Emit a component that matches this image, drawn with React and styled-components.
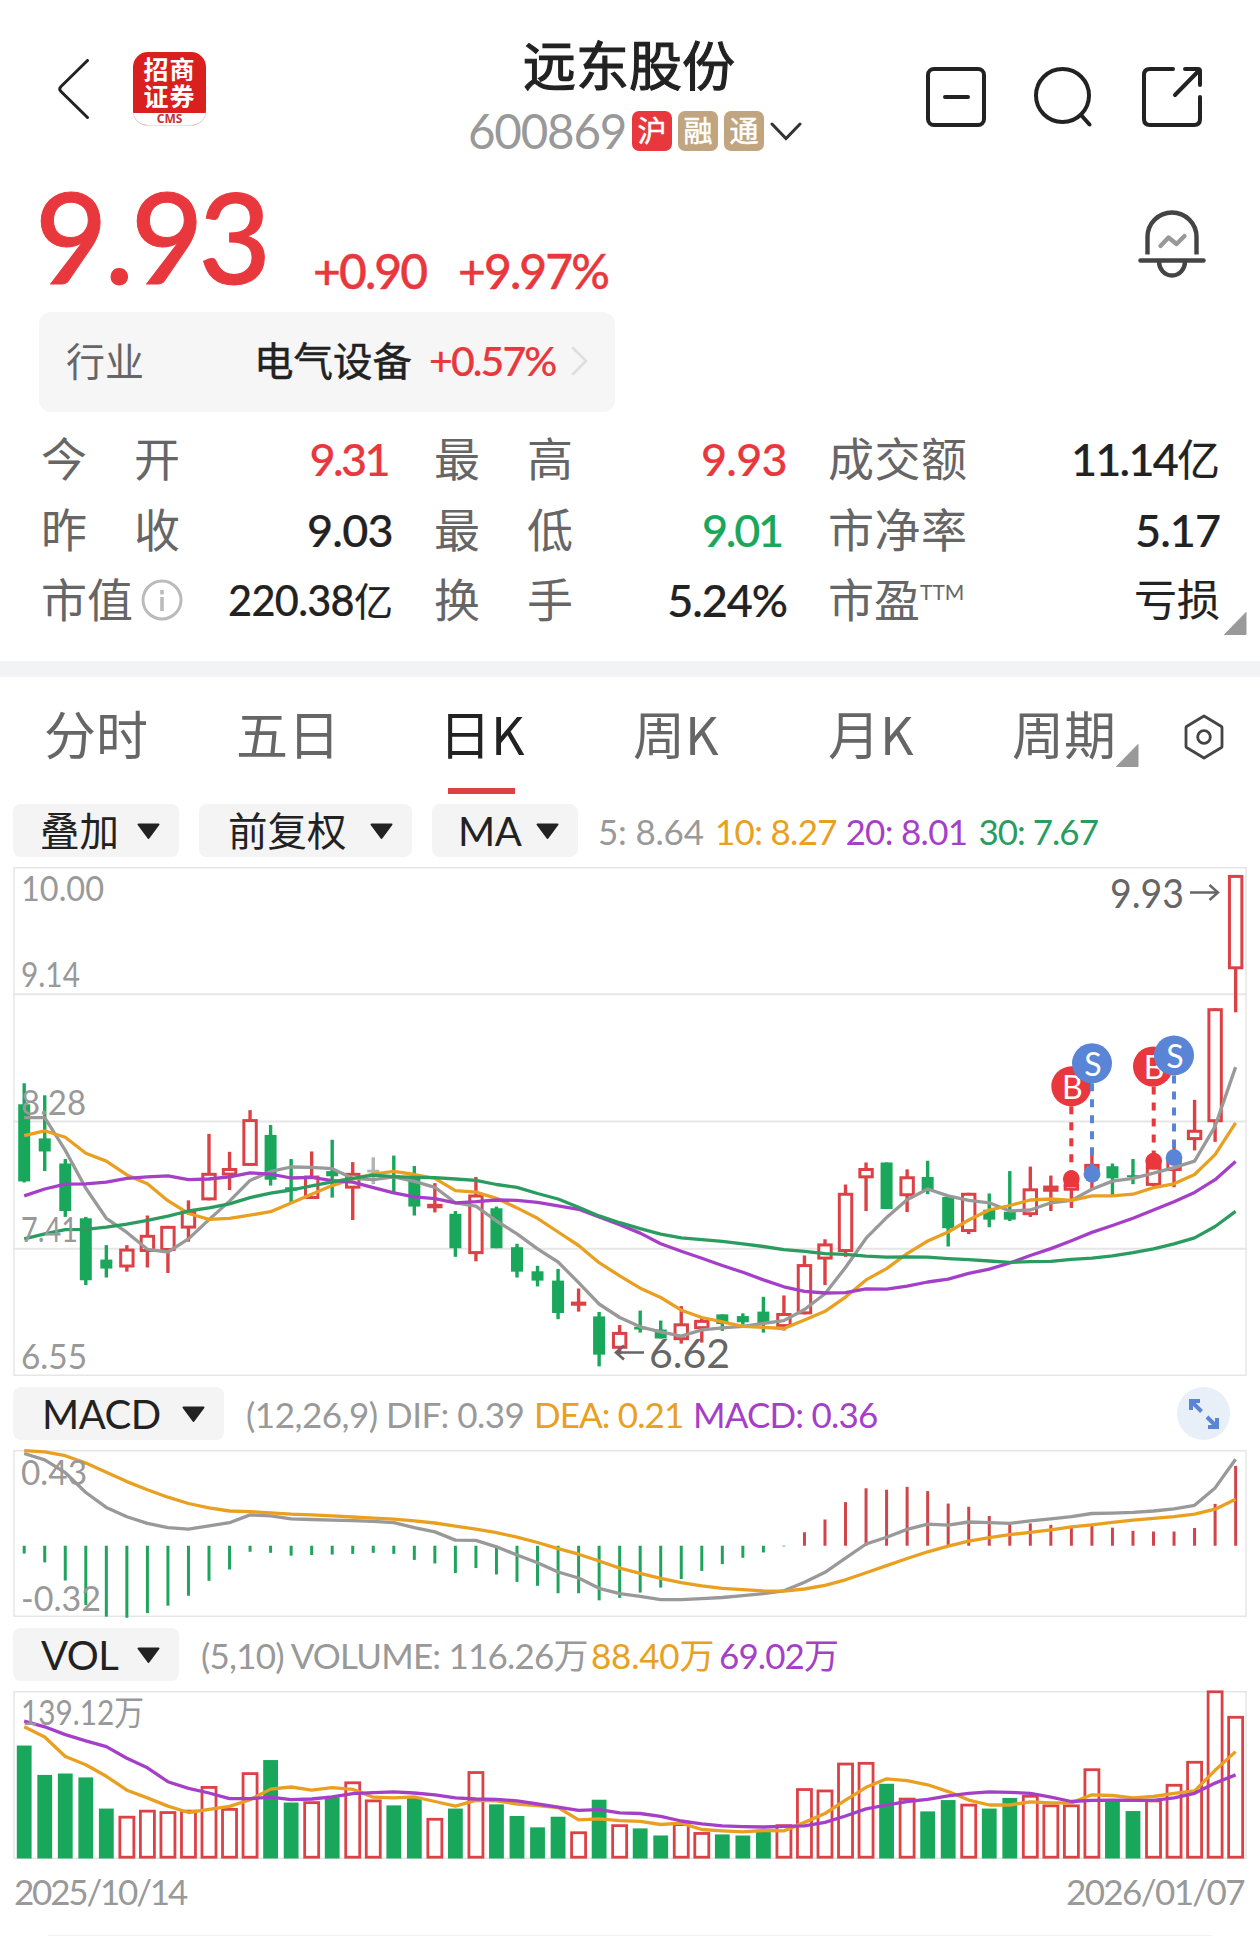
import React from "react";
import styled, { createGlobalStyle } from "styled-components";

const RED = "#e8383d";
const CANDLE_RED = "#dc4146";
const GREEN = "#18a75b";
const GREY = "#999999";
const ORANGE = "#e9a021";
const PURPLE = "#a63fc8";
const LINE_GREEN = "#2b9c5f";

// [high, body top, body bottom, low, direction]
const candles = [
  [650, 711, 935, 938, "d"], [685, 810, 848, 905, "d"], [870, 883, 1021, 1038, "d"],
  [1038, 1042, 1222, 1236, "d"], [1120, 1162, 1188, 1214, "d"], [1120, 1130, 1185, 1197, "u"],
  [1034, 1090, 1140, 1185, "u"], [1064, 1064, 1137, 1201, "u"], [990, 1020, 1072, 1110, "u"],
  [797, 910, 990, 990, "u"], [849, 896, 918, 960, "u"], [728, 754, 890, 890, "u"],
  [771, 800, 930, 947, "d"], [870, 952, 962, 998, "d"], [848, 918, 986, 986, "u"],
  [814, 905, 920, 982, "d"], [879, 910, 956, 1047, "u"], [865, 901, 909, 943, "f"],
  [860, 917, 923, 970, "d"], [890, 925, 1008, 1034, "d"], [940, 1000, 1013, 1025, "u"],
  [1021, 1029, 1129, 1154, "d"], [922, 973, 1146, 1167, "u"], [1008, 1013, 1129, 1129, "d"],
  [1116, 1126, 1197, 1214, "d"], [1180, 1196, 1223, 1240, "d"], [1189, 1223, 1317, 1335, "d"],
  [1246, 1284, 1296, 1313, "u"], [1314, 1327, 1438, 1472, "d"], [1352, 1372, 1421, 1437, "u"],
  [1310, 1357, 1365, 1374, "d"], [1339, 1365, 1391, 1391, "d"], [1297, 1347, 1396, 1406, "u"],
  [1331, 1337, 1364, 1403, "u"], [1321, 1321, 1349, 1369, "d"], [1318, 1326, 1344, 1351, "d"],
  [1270, 1313, 1347, 1374, "d"], [1266, 1317, 1358, 1368, "u"], [1150, 1175, 1321, 1321, "u"],
  [1103, 1115, 1162, 1236, "u"], [944, 968, 1140, 1154, "u"], [880, 896, 926, 1021, "u"],
  [880, 880, 1015, 1015, "d"], [900, 920, 978, 1024, "u"], [875, 922, 960, 972, "d"],
  [975, 980, 1071, 1124, "d"], [968, 968, 1082, 1088, "u"], [970, 1017, 1046, 1068, "d"],
  [905, 1023, 1046, 1050, "d"], [892, 955, 1033, 1038, "u"], [918, 947, 965, 1021, "u"],
  [935, 943, 962, 1012, "u"], [845, 884, 905, 960, "u"], [883, 891, 926, 980, "d"],
  [870, 917, 922, 943, "d"], [870, 885, 948, 950, "u"], [835, 865, 905, 952, "u"],
  [698, 785, 815, 845, "u"], [432, 432, 763, 820, "u"], [45, 45, 319, 444, "u"],
];

const ma5 = [
  750, 750, 845, 955, 1042, 1083, 1132, 1140, 1102, 1046, 992, 932, 906, 893, 894, 898, 926, 930, 922, 935,
  952, 997, 1007, 1050, 1087, 1131, 1169, 1229, 1291, 1330, 1357, 1372, 1384, 1366, 1360, 1356, 1347, 1339, 1307, 1261,
  1185, 1100, 1040, 988, 957, 977, 990, 997, 1021, 1018, 997, 990, 958, 934, 926, 911, 895, 876, 775, 603,
];
const ma10 = [
  802, 788, 807, 853, 876, 916, 942, 991, 1028, 1045, 1042, 1033, 1023, 998, 972, 947, 928, 914, 906, 915,
  926, 962, 966, 984, 1012, 1042, 1082, 1121, 1171, 1209, 1245, 1272, 1309, 1330, 1343, 1356, 1359, 1362, 1337, 1312,
  1271, 1221, 1188, 1145, 1108, 1082, 1047, 1018, 1005, 989, 986, 990, 977, 977, 972, 953, 942, 915, 857, 765,
];
const ma20 = [
  977, 957, 943, 942, 937, 926, 922, 919, 930, 928, 922, 910, 914, 925, 923, 933, 937, 953, 968, 980,
  985, 997, 994, 989, 990, 996, 1006, 1016, 1038, 1061, 1085, 1116, 1138, 1158, 1179, 1199, 1221, 1241, 1254, 1259,
  1258, 1247, 1248, 1239, 1227, 1219, 1202, 1190, 1172, 1150, 1130, 1107, 1083, 1063, 1042, 1018, 994, 967, 930, 877,
];
const ma30 = [
  1102, 1087, 1075, 1074, 1068, 1059, 1048, 1036, 1021, 1012, 1000, 982, 969, 960, 948, 936, 926, 917, 921, 923,
  924, 928, 932, 944, 952, 970, 986, 1010, 1035, 1055, 1072, 1088, 1099, 1104, 1109, 1116, 1124, 1133, 1138, 1145,
  1147, 1152, 1155, 1154, 1155, 1159, 1162, 1166, 1170, 1168, 1167, 1161, 1158, 1151, 1142, 1131, 1116, 1099, 1066, 1022,
];

const macdBars = [
  490, 515, 566, 635, 668, 671, 658, 637, 609, 567, 535, 485, 488, 496, 494, 493, 491, 488, 491, 508,
  518, 545, 531, 549, 570, 581, 602, 602, 622, 615, 600, 586, 562, 539, 520, 502, 487, 470, 430, 394,
  345, 306, 310, 302, 314, 349, 358, 384, 409, 405, 409, 418, 410, 417, 426, 428, 428, 418, 350, 243,
];
const dif = [
  208, 226, 262, 318, 360, 386, 405, 417, 421, 412, 403, 381, 384, 392, 394, 396, 397, 399, 403, 417,
  429, 452, 453, 471, 494, 516, 542, 559, 588, 603, 611, 620, 620, 617, 614, 609, 603, 595, 571, 543,
  503, 463, 444, 422, 407, 410, 401, 403, 405, 398, 392, 386, 377, 376, 374, 370, 364, 354, 305, 224,
];
const dea = [
  200, 203, 214, 235, 261, 287, 310, 331, 349, 361, 370, 372, 375, 379, 381, 384, 387, 390, 393, 398,
  404, 413, 421, 431, 444, 459, 476, 492, 511, 531, 546, 560, 572, 581, 588, 592, 595, 596, 590, 580,
  564, 544, 524, 504, 485, 469, 455, 445, 437, 430, 423, 415, 409, 402, 396, 391, 386, 379, 365, 337,
];

const volumes = [
  1032, 1115, 1111, 1122, 1210, 1232, 1215, 1219, 1215, 1148, 1210, 1109, 1073, 1193, 1191, 1178, 1135, 1186, 1201, 1180,
  1238, 1210, 1106, 1198, 1231, 1263, 1233, 1276, 1185, 1256, 1266, 1286, 1253, 1278, 1283, 1286, 1275, 1256, 1154, 1158,
  1082, 1080, 1140, 1181, 1218, 1186, 1198, 1210, 1180, 1173, 1200, 1200, 1098, 1190, 1217, 1186, 1142, 1077, 878, 950,
];
const volumeDown = [0, 1, 2, 3, 4, 12, 13, 15, 18, 19, 21, 23, 24, 25, 26, 28, 30, 31, 34, 35, 36, 42, 44, 45, 47, 48, 53, 54];
const volMa5 = [
  979, 1008, 1063, 1086, 1119, 1158, 1180, 1203, 1221, 1212, 1204, 1185, 1155, 1149, 1158, 1151, 1156, 1178, 1180, 1177,
  1190, 1203, 1187, 1188, 1197, 1202, 1207, 1242, 1239, 1244, 1246, 1255, 1251, 1269, 1273, 1276, 1272, 1273, 1249, 1224,
  1186, 1150, 1126, 1131, 1143, 1162, 1186, 1200, 1200, 1191, 1194, 1194, 1171, 1173, 1180, 1176, 1167, 1160, 1102, 1049,
];
const volMa10 = [
  963, 979, 1001, 1019, 1035, 1068, 1095, 1134, 1153, 1166, 1182, 1182, 1178, 1185, 1183, 1177, 1168, 1165, 1163, 1166,
  1171, 1180, 1183, 1184, 1188, 1197, 1206, 1215, 1213, 1222, 1224, 1232, 1245, 1253, 1259, 1261, 1262, 1260, 1259, 1249,
  1231, 1211, 1200, 1190, 1184, 1174, 1167, 1163, 1164, 1167, 1178, 1190, 1187, 1186, 1187, 1187, 1180, 1167, 1138, 1115,
];

const stats = [
  [
    { label: ["今", "开"], value: "9.31", color: RED, inset: 5, spacing: -2.6 },
    { label: ["最", "高"], value: "9.93", color: RED },
    { label: ["成", "交", "额"], value: "11.14", unit: "亿", spacing: -1.8 },
  ],
  [
    { label: ["昨", "收"], value: "9.03" },
    { label: ["最", "低"], value: "9.01", color: GREEN, inset: 5, spacing: -2.2 },
    { label: ["市", "净", "率"], value: "5.17", spacing: -1 },
  ],
  [
    { label: ["市", "值"], info: true, value: "220.38", unit: "亿", small: true },
    { label: ["换", "手"], value: "5.24%", spacing: -1.1 },
    { label: ["市", "盈"], sup: "TTM", text: "亏损" },
  ],
];

const markers = [
  { type: "B", x: 1071.3, y: 659, dot: 927 },
  { type: "S", x: 1092, y: 592, dot: 914 },
  { type: "B", x: 1153, dotX: 1153.7, y: 601, dot: 876 },
  { type: "S", x: 1174, y: 569, dot: 866 },
];

const PLOT_W = 1234;
const xAt = (i) => 11.2 + i * 20.533;
const scale = (top, bottom, height) => (v) => ((v - top) * height) / (bottom - top);
const points = (series, y) => series.map((v, i) => `${xAt(i).toFixed(1)},${y(v).toFixed(1)}`).join(" ");

const Trend = ({ series, y, color }) => (
  <polyline points={points(series, y)} fill="none" stroke={color} strokeWidth="3.3" strokeLinejoin="round" />
);

const CandleChart = () => {
  const H = 509;
  const y = scale(22, 1500, H);
  const labels = [["10.00", 34, 82], ["9.14", 120, 58], ["8.28", 247.5, 64], ["7.41", 375, 56], ["6.55", 502, 65]];
  return (
    <Plot viewBox={`0 0 ${PLOT_W} ${H}`} $height={H}>
      {[0.25, 0.5, 0.75].map((k) => (
        <line key={k} x1="0" x2={PLOT_W} y1={H * k} y2={H * k} stroke="#e6e6e6" strokeWidth="2" />
      ))}
      <rect x="1" y="0.75" width={PLOT_W - 2} height={H - 1.5} fill="none" stroke="#e6e6e6" strokeWidth="1.5" />
      {candles.map(([high, top, bottom, low, dir], i) => {
        const x = xAt(i);
        const h = Math.max(y(bottom) - y(top), 2);
        const color = dir === "u" ? CANDLE_RED : dir === "d" ? GREEN : "#b4b4b4";
        const hollow = dir === "u" && h > 6.5;
        return (
          <g key={i}>
            <line x1={x} x2={x} y1={y(high)} y2={y(top) + 1} stroke={color} strokeWidth="3.4" />
            <line x1={x} x2={x} y1={y(bottom) - 1} y2={y(low)} stroke={color} strokeWidth="3.4" />
            {hollow ? (
              <rect x={x - 6.2} y={y(top) + 1.5} width="12.4" height={h - 3} fill="#fff" stroke={color} strokeWidth="3" />
            ) : (
              <rect x={x - (dir === "u" ? 7.7 : 6)} y={y(top)} width={dir === "u" ? 15.4 : 12} height={h} fill={color} />
            )}
          </g>
        );
      })}
      <Trend series={ma5} y={y} color={GREY} />
      <Trend series={ma10} y={y} color={ORANGE} />
      <Trend series={ma20} y={y} color={PURPLE} />
      <Trend series={ma30} y={y} color={LINE_GREEN} />
      {labels.map(([text, ty, w]) => (
        <AxisText key={text} x="8" y={ty} textLength={w + 1} lengthAdjust="spacingAndGlyphs">{text}</AxisText>
      ))}
      {markers.map(({ type, x, dotX, y: cy, dot }, i) => {
        const color = type === "B" ? RED : "#5a85d6";
        const px = (dotX || x) - 13;
        return (
          <g key={i}>
            <line x1={px} x2={px} y1={y(cy) + 20} y2={y(dot)} stroke={color} strokeWidth="4" strokeDasharray="8 8" />
            <circle cx={px} cy={y(dot)} r="8.4" fill={color} />
            {type === "B" && <rect x={px - 7.5} y={y(dot) + 2} width="15" height="6.5" fill={color} />}
            <circle cx={x - 13} cy={y(cy)} r="20" fill={color} />
            <MarkerText x={x - 12} y={y(cy) + 13}>{type}</MarkerText>
          </g>
        );
      })}
      <NoteText x="1097" y="40.500" textLength="74" lengthAdjust="spacingAndGlyphs">9.93</NoteText>
      <path d="M1177 25.5H1205M1196.5 18l8.5 7.5-8.5 7.5" fill="none" stroke="#666" strokeWidth="2.4" />
      <NoteText x="636" y="501" textLength="81" lengthAdjust="spacingAndGlyphs">6.62</NoteText>
      <path d="M631 485.500H603M611 478.500l-8 7 8 7" fill="none" stroke="#666" strokeWidth="2.6" />
    </Plot>
  );
};

const MacdChart = () => {
  const H = 167;
  const y = scale(198, 669, H);
  return (
    <Plot viewBox={`0 0 ${PLOT_W} ${H}`} $height={H}>
      <rect x="1" y="0.75" width={PLOT_W - 2} height={H - 1.5} fill="none" stroke="#e6e6e6" strokeWidth="1.5" />
      {macdBars.map((v, i) => (
        <line key={i} x1={xAt(i)} x2={xAt(i)} y1={y(468)} y2={y(v)} stroke={v > 468 ? "#1fa45e" : "#cf4549"} strokeWidth="3" />
      ))}
      <Trend series={dif} y={y} color={GREY} />
      <Trend series={dea} y={y} color={ORANGE} />
      <AxisText x="8" y="35" textLength="66" lengthAdjust="spacingAndGlyphs">0.43</AxisText>
      <AxisText x="8" y="161" textLength="80" lengthAdjust="spacingAndGlyphs">-0.32</AxisText>
    </Plot>
  );
};

const VolumeChart = () => {
  const H = 168;
  const y = scale(878, 1351, 167.5);
  return (
    <Plot viewBox={`0 0 ${PLOT_W} ${H}`} $height={H}>
      <rect x="1" y="0.75" width={PLOT_W - 2} height={H - 1.5} fill="none" stroke="#e6e6e6" strokeWidth="1.5" />
      {volumes.map((v, i) =>
        volumeDown.includes(i) ? (
          <rect key={i} x={xAt(i) - 7.4} y={y(v)} width="14.8" height={167.5 - y(v)} fill={GREEN} />
        ) : (
          <rect key={i} x={xAt(i) - 7} y={y(v) + 0.8} width="14" height={165.4 - y(v)} fill="#fff" stroke={CANDLE_RED} strokeWidth="2.8" />
        )
      )}
      <Trend series={volMa5} y={y} color={ORANGE} />
      <Trend series={volMa10} y={y} color={PURPLE} />
      <AxisText x="8" y="34" textLength="123" lengthAdjust="spacingAndGlyphs">139.12万</AxisText>
    </Plot>
  );
};

const Caret = () => (
  <svg width="25" height="17" viewBox="0 0 25 17">
    <path d="M2.500 1.500h20L12.500 15z" fill="#222" stroke="#222" strokeWidth="2" strokeLinejoin="round" />
  </svg>
);

const Corner = () => (
  <svg width="23" height="23" viewBox="0 0 23 23">
    <path d="M22 0.500v22H0.500z" fill="#999" stroke="#999" strokeLinejoin="round" />
  </svg>
);

const App = () => {
  return (
    <>
      <GlobalStyle />
      <Page>
        <Header>
          <HeaderLeft>
            <svg width="32" height="60" viewBox="0 0 32 60" fill="none" stroke="#222" strokeWidth="3" strokeLinecap="round">
              <path d="M29.500 1.500L3 27.500q-2.500 2.500 0 5L29.500 58.500" />
            </svg>
            <Logo>
              <LogoName>招商</LogoName>
              <LogoName>证券</LogoName>
              <LogoFoot>CMS</LogoFoot>
            </Logo>
          </HeaderLeft>
          <HeaderTitle>
            <StockName>远东股份</StockName>
            <StockCode>
              <span>600869</span>
              <Badge $bg={RED}>沪</Badge>
              <Badge $bg="#c0a580">融</Badge>
              <Badge $bg="#c0a580">通</Badge>
              <svg width="32" height="19" viewBox="0 0 32 19" fill="none" stroke="#333" strokeWidth="3" strokeLinecap="round">
                <path d="M2 2l14 14.500L30 2" />
              </svg>
            </StockCode>
          </HeaderTitle>
          <HeaderActions>
            <svg width="60" height="60" viewBox="0 0 60 60" fill="none" stroke="#222" strokeWidth="4" strokeLinecap="round">
              <rect x="2" y="2" width="56" height="56" rx="6" />
              <path d="M19 30h23" />
            </svg>
            <svg width="60" height="60" viewBox="0 0 60 60" fill="none" stroke="#222" strokeWidth="4" strokeLinecap="round">
              <circle cx="28.500" cy="28.500" r="26.500" />
              <path d="M47.500 48.500l8 9" />
            </svg>
            <svg width="60" height="60" viewBox="0 0 60 60" fill="none" stroke="#222" strokeWidth="4" strokeLinecap="round">
              <path d="M31 2H8q-6 0-6 6v44q0 6 6 6h44q6 0 6-6V30" />
              <path d="M43 2h13q2 0 2 2v14M57 3.500L33 28" />
            </svg>
          </HeaderActions>
        </Header>

        <Quote>
          <Price>
            9<Dot>.</Dot>93
          </Price>
          <Change>+0.90</Change>
          <Change>+9.97%</Change>
          <BellButton>
            <svg width="68" height="68" viewBox="0 0 68 68" fill="none" stroke="#444" strokeWidth="4.400">
              <path d="M9.500 44.500V27a24.500 24.500 0 0 1 49 0v17.500" />
              <path d="M2.500 50.500h63" strokeLinecap="round" />
              <path d="M21 51.500c0 7 5 14 13 14s13-7 13-14" />
              <path d="M22.500 36l8-8.500 8 6.500 8-8" stroke="#999" strokeLinecap="round" strokeLinejoin="round" />
            </svg>
          </BellButton>
        </Quote>

        <Industry>
          <IndustryLabel>行业</IndustryLabel>
          <IndustryName>电气设备</IndustryName>
          <IndustryChange>+0.57%</IndustryChange>
          <svg width="17" height="30" viewBox="0 0 17 30" fill="none" stroke="#dedede" strokeWidth="2.600" strokeLinecap="round">
            <path d="M2 2l13 13L2 28" />
          </svg>
        </Industry>

        <Stats>
          {stats.flat().map((item) => (
            <Stat key={item.label.join("")}>
              <StatLabel $tight={item.info || item.sup}>
                {item.label.map((c) => (
                  <span key={c}>{c}</span>
                ))}
                {item.sup && <Sup>{item.sup}</Sup>}
                {item.info && (
                  <InfoIcon width="42" height="42" viewBox="0 0 42 42" fill="none" stroke="#bbb" strokeWidth="3">
                    <circle cx="21" cy="21" r="19" />
                    <path d="M21 18v14M21 11v4.500" strokeWidth="3.600" />
                  </InfoIcon>
                )}
              </StatLabel>
              <StatValue $color={item.color} $small={item.small} $inset={item.inset} $spacing={item.spacing}>
                {item.value}
                {item.unit && <Unit $small={item.small}>{item.unit}</Unit>}
                {item.text && <Unit>{item.text}</Unit>}
              </StatValue>
            </Stat>
          ))}
          <StatsCorner>
            <Corner />
          </StatsCorner>
        </Stats>

        <Divider />

        <Tabs>
          <Tab $width={192}>分时</Tab>
          <Tab $width={203}>五日</Tab>
          <Tab $width={194} $active>日K</Tab>
          <Tab $width={195}>周K</Tab>
          <Tab $width={184}>月K</Tab>
          <Tab $width={104}>周期</Tab>
          <TabCorner>
            <Corner />
          </TabCorner>
          <svg width="40" height="46" viewBox="0 0 40 46" fill="none" stroke="#444" strokeWidth="2.800" strokeLinejoin="round">
            <path d="M20 2L37.500 12.500q.500.500.500 1v19q0 .500-.500 1L20 44 2.500 33.500Q2 33 2 32.500v-19q0-.500.500-1z" />
            <circle cx="20" cy="23" r="6.300" />
          </svg>
        </Tabs>

        <Toolbar>
          <Chip $width={166} $left={27}>叠加<Caret /></Chip>
          <Chip $width={213} $left={29}>前复权<Caret /></Chip>
          <Chip $width={146} $left={26} $latin>MA<Caret /></Chip>
          <Legend $left={20}>
            <Reading $width={117} $spacing={-0.2}>5: 8.64</Reading>
            <Reading $width={130.5} $color={ORANGE}>10: 8.27</Reading>
            <Reading $width={133} $color={PURPLE}>20: 8.01</Reading>
            <Reading $color={LINE_GREEN} $spacing={-1}>30: 7.67</Reading>
          </Legend>
        </Toolbar>
        <CandleChart />

        <Toolbar>
          <Chip $width={211} $left={29} $latin>MACD<Caret /></Chip>
          <Legend $left={22}>
            <Reading $width={288} $spacing={-0.5}>(12,26,9) DIF: 0.39</Reading>
            <Reading $width={159} $color={ORANGE} $spacing={-0.9}>DEA: 0.21</Reading>
            <Reading $color={PURPLE} $spacing={-0.8}>MACD: 0.36</Reading>
          </Legend>
          <ExpandButton>
            <svg width="32" height="32" viewBox="0 0 32 32" fill="none" stroke="#5a85d6" strokeWidth="4">
              <path d="M13.500 13.500L4 4M3 12V3h9M19 19l9 9M20 29h9v-9" />
            </svg>
          </ExpandButton>
        </Toolbar>
        <MacdChart />

        <Toolbar>
          <Chip $width={166} $left={28} $latin>VOL<Caret /></Chip>
          <Legend $left={22}>
            <Reading $width={390} $spacing={-0.8}>(5,10) VOLUME: 116.26万</Reading>
            <Reading $width={128} $color={ORANGE} $spacing={-0.2}>88.40万</Reading>
            <Reading $color={PURPLE} $spacing={-0.9}>69.02万</Reading>
          </Legend>
        </Toolbar>
        <VolumeChart />

        <Dates>
          <DateText $spacing={-2.2}>2025/10/14</DateText>
          <DateText $spacing={-1.6}>2026/01/07</DateText>
        </Dates>
        <BottomRule />
      </Page>
    </>
  );
};

export default App;

const GlobalStyle = createGlobalStyle`
  * {
    box-sizing: border-box;
  }
  body {
    margin: 0;
    background: #fff;
    font-family: Lato, "Noto Sans CJK SC", sans-serif;
    color: #222;
  }
  svg {
    display: block;
    flex-shrink: 0;
  }
`;

const Page = styled.div`
  width: 1260px;
  height: 1936px;
  overflow: hidden;
  background: #fff;
  display: flex;
  flex-direction: column;
`;

const Header = styled.div`
  height: 170px;
  flex-shrink: 0;
  display: grid;
  grid-template-columns: 468px 1fr 334px;
`;

const HeaderLeft = styled.div`
  display: flex;
  align-items: flex-start;
  gap: 43px;
  padding: 52px 0 0 58px;

  > svg {
    margin-top: 7px;
  }
`;

const Logo = styled.div`
  width: 73px;
  height: 74px;
  padding-top: 4px;
  border-radius: 15px;
  overflow: hidden;
  background: #d9201f;
  border-bottom: 1px solid #e2e2e2;
`;

const LogoName = styled.div`
  height: 27px;
  text-align: center;
  font-size: 25px;
  line-height: 27px;
  letter-spacing: 1px;
  font-weight: 700;
  color: #fff;
`;

const LogoFoot = styled.div`
  height: 14px;
  margin-top: 3px;
  background: #fff;
  color: #c9302c;
  text-align: center;
  font-family: "Noto Sans", sans-serif;
  font-size: 12px;
  line-height: 11px;
  font-weight: 700;
`;

const HeaderTitle = styled.div`
  padding-top: 35px;
`;

const StockName = styled.div`
  padding-left: 55px;
  font-size: 53px;
  line-height: 61px;
  -webkit-text-stroke: 1.1px #222;
`;

const StockCode = styled.div`
  height: 40px;
  margin-top: 15px;
  display: flex;
  align-items: center;
  gap: 6px;
  font-size: 47.500px;
  line-height: 40px;
  letter-spacing: -1.200px;
  color: #999;

  > span:first-child {
    width: 158px;
  }
`;

const Badge = styled.div`
  width: 40px;
  height: 40px;
  border-radius: 7px;
  background: ${({ $bg }) => $bg};
  color: #fff;
  font-size: 29px;
  letter-spacing: 0;
  text-align: center;
  -webkit-text-stroke: 0.5px #fff;
`;

const HeaderActions = styled.div`
  display: flex;
  gap: 48px;
  padding: 67px 58px 0 0;
  justify-content: flex-end;
`;

const Quote = styled.div`
  height: 142px;
  flex-shrink: 0;
  display: flex;
  align-items: baseline;
  padding-left: 35px;
  color: ${RED};
`;

const Price = styled.div`
  width: 278px;
  font-size: 125px;
  line-height: 132px;
  font-weight: 500;
  letter-spacing: -5px;
  -webkit-text-stroke: 1px ${RED};
`;

const Dot = styled.span`
  margin: 0 2px;
`;

const Change = styled.div`
  width: 145px;
  font-size: 48px;
  line-height: 60px;
  font-weight: 500;
  letter-spacing: -1.900px;
  position: relative;
  top: 5px;
  -webkit-text-stroke: 0.4px ${RED};
`;

const BellButton = styled.div`
  margin-left: auto;
  padding: 40px 54px 0 0;
  align-self: flex-start;
`;

const Industry = styled.div`
  width: 576px;
  height: 100px;
  flex-shrink: 0;
  margin-left: 39px;
  padding: 0 26px 2px 27px;
  border-radius: 12px;
  background: #f6f6f7;
  display: flex;
  align-items: center;
  line-height: 60px;
`;

const IndustryLabel = styled.div`
  width: 188px;
  font-size: 39px;
  color: #666;
`;

const IndustryName = styled.div`
  width: 175px;
  font-size: 39.500px;
  -webkit-text-stroke: 0.5px #222;
`;

const IndustryChange = styled.div`
  width: 142px;
  font-size: 41px;
  font-weight: 500;
  letter-spacing: -1.900px;
  color: ${RED};
  -webkit-text-stroke: 0.2px ${RED};
`;

const Stats = styled.div`
  position: relative;
  height: 249px;
  flex-shrink: 0;
  padding: 12px 40px 0 41px;
  display: grid;
  grid-template-columns: 352px 353px 392px;
  column-gap: 41px;
  grid-auto-rows: 70.500px;
`;

const Stat = styled.div`
  display: flex;
  justify-content: space-between;
  align-items: center;
`;

const StatLabel = styled.div`
  display: flex;
  align-items: center;
  width: ${({ $tight }) => ($tight ? "auto" : "139px")};
  justify-content: space-between;
  font-size: 46px;
  line-height: 60px;
  color: #666;
`;

const Sup = styled.sup`
  font-size: 21px;
  line-height: 22px;
  align-self: flex-start;
  margin-top: 11px;
`;

const InfoIcon = styled.svg`
  margin-left: 8px;
`;

const StatValue = styled.div`
  display: flex;
  align-items: baseline;
  padding-right: ${({ $inset }) => $inset || 0}px;
  font-size: ${({ $small }) => ($small ? 41.5 : 45)}px;
  line-height: 60px;
  font-weight: 500;
  -webkit-text-stroke: 0.2px;
  letter-spacing: ${({ $spacing }) => $spacing || -0.7}px;
  color: ${({ $color }) => $color || "#222"};
`;

const Unit = styled.span`
  font-size: ${({ $small }) => ($small ? 39 : 43)}px;
  font-weight: 400;
  letter-spacing: 0;
`;

const StatsCorner = styled.div`
  position: absolute;
  right: 13px;
  bottom: 26px;
`;

const Divider = styled.div`
  height: 16px;
  flex-shrink: 0;
  background: #f2f3f5;
`;

const Tabs = styled.div`
  height: 127px;
  flex-shrink: 0;
  display: flex;
  align-items: flex-start;
  padding-left: 44px;

  > svg {
    margin: 37px 0 0 45px;
  }
`;

const Tab = styled.div`
  width: ${({ $width }) => $width}px;
  height: 117px;
  padding-top: 26px;
  flex-shrink: 0;
  white-space: nowrap;
  font-family: "Noto Sans CJK SC", sans-serif;
  font-size: 52px;
  line-height: 60px;
  color: ${({ $active }) => ($active ? "#222" : "#666")};

  &::after {
    content: "";
    display: ${({ $active }) => ($active ? "block" : "none")};
    width: 67px;
    height: 6px;
    margin: 25px 0 0 9px;
    background: ${CANDLE_RED};
  }
`;

const TabCorner = styled.div`
  margin-top: 67px;
`;

const Toolbar = styled.div`
  height: 53px;
  flex-shrink: 0;
  padding: 0 30px 0 13px;
  display: flex;
  align-items: center;
`;

const Chip = styled.div`
  width: ${({ $width }) => $width}px;
  height: 53px;
  flex-shrink: 0;
  padding: 1px 18px 0 ${({ $left }) => $left}px;
  border-radius: 8px;
  background: #f4f4f4;
  display: flex;
  align-items: center;
  justify-content: space-between;
  font-size: ${({ $latin }) => ($latin ? 40 : 39.5)}px;
  letter-spacing: ${({ $latin }) => ($latin ? -0.5 : 0)}px;
  line-height: 56px;

  > svg {
    margin-top: 1px;
  }

  & + & {
    margin-left: 20px;
  }
`;

const Legend = styled.div`
  display: flex;
  margin-left: ${({ $left }) => $left}px;
  font-size: 35px;
  line-height: 54px;
  white-space: nowrap;
`;

const Reading = styled.div`
  width: ${({ $width }) => ($width ? `${$width}px` : "auto")};
  letter-spacing: ${({ $spacing }) => $spacing || -0.7}px;
  color: ${({ $color }) => $color || GREY};
`;

const ExpandButton = styled.div`
  width: 53px;
  height: 53px;
  margin-left: auto;
  border-radius: 50%;
  background: #e9eff9;
  display: flex;
  align-items: center;
  justify-content: center;
`;

const Plot = styled.svg`
  width: 1234px;
  height: ${({ $height }) => $height}px;
  margin: 10px 0 11px 13px;
  overflow: visible;
`;

const AxisText = styled.text`
  font-size: 34px;
  fill: #999;
`;

const NoteText = styled.text`
  font-size: 41px;
  fill: #666;
`;

const MarkerText = styled.text`
  font-size: 32px;
  fill: #fff;
  text-anchor: middle;
`;

const Dates = styled.div`
  height: 65px;
  flex-shrink: 0;
  padding: 0 16px 0 14px;
  display: flex;
  justify-content: space-between;
  font-size: 35px;
  line-height: 42px;
  color: #999;
`;

const DateText = styled.span`
  letter-spacing: ${({ $spacing }) => $spacing}px;
`;

const BottomRule = styled.div`
  height: 2px;
  flex-shrink: 0;
  margin: 0 48px;
  background: #f2f2f2;
`;
